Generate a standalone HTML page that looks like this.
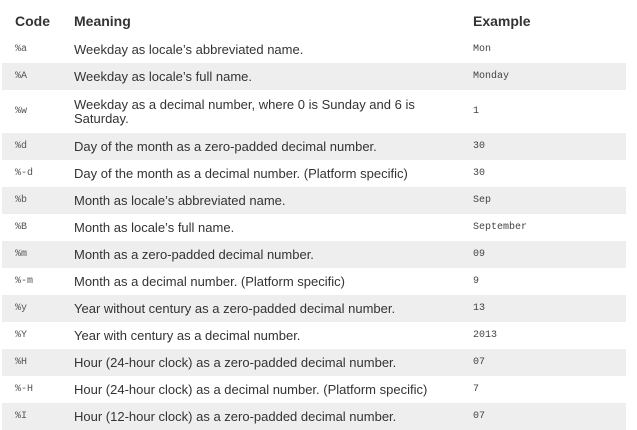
<!DOCTYPE html><html><head><style>
body{margin:0;background:#fff;font-family:"Liberation Sans",Arial,sans-serif;font-size:13px;color:#333}
table{position:absolute;left:2px;top:0;width:624px;border-collapse:collapse;border-spacing:0}
td,th{padding:0;vertical-align:middle;text-align:left;border:0}
th{height:36px;padding-top:6px;box-sizing:border-box;font-weight:bold;color:#333;font-size:14px}
td{height:27px;line-height:14px}
tr.s td{background:#eee}
.c{padding-left:13px;width:59px;font-family:"Liberation Mono","DejaVu Sans Mono",monospace;font-size:10px;color:#555}
.m{width:399px}
.e{font-family:"Liberation Mono","DejaVu Sans Mono",monospace;font-size:10px;color:#444}
th.c{font-family:"Liberation Sans",Arial,sans-serif;font-size:14px;color:#333}
</style></head><body>
<table>
<tr><th class="c">Code</th><th class="m">Meaning</th><th>Example</th></tr>
<tr><td class="c">%a</td><td class="m">Weekday as locale’s abbreviated name.</td><td class="e">Mon</td></tr>
<tr class="s"><td class="c">%A</td><td class="m">Weekday as locale’s full name.</td><td class="e">Monday</td></tr>
<tr><td class="c" style="height:43px">%w</td><td class="m">Weekday as a decimal number, where 0 is Sunday and 6 is Saturday.</td><td class="e">1</td></tr>
<tr class="s"><td class="c">%d</td><td class="m">Day of the month as a zero-padded decimal number.</td><td class="e">30</td></tr>
<tr><td class="c">%-d</td><td class="m">Day of the month as a decimal number. (Platform specific)</td><td class="e">30</td></tr>
<tr class="s"><td class="c">%b</td><td class="m">Month as locale’s abbreviated name.</td><td class="e">Sep</td></tr>
<tr><td class="c">%B</td><td class="m">Month as locale’s full name.</td><td class="e">September</td></tr>
<tr class="s"><td class="c">%m</td><td class="m">Month as a zero-padded decimal number.</td><td class="e">09</td></tr>
<tr><td class="c">%-m</td><td class="m">Month as a decimal number. (Platform specific)</td><td class="e">9</td></tr>
<tr class="s"><td class="c">%y</td><td class="m">Year without century as a zero-padded decimal number.</td><td class="e">13</td></tr>
<tr><td class="c">%Y</td><td class="m">Year with century as a decimal number.</td><td class="e">2013</td></tr>
<tr class="s"><td class="c">%H</td><td class="m">Hour (24-hour clock) as a zero-padded decimal number.</td><td class="e">07</td></tr>
<tr><td class="c">%-H</td><td class="m">Hour (24-hour clock) as a decimal number. (Platform specific)</td><td class="e">7</td></tr>
<tr class="s"><td class="c">%I</td><td class="m">Hour (12-hour clock) as a zero-padded decimal number.</td><td class="e">07</td></tr>
</table>
</body></html>
